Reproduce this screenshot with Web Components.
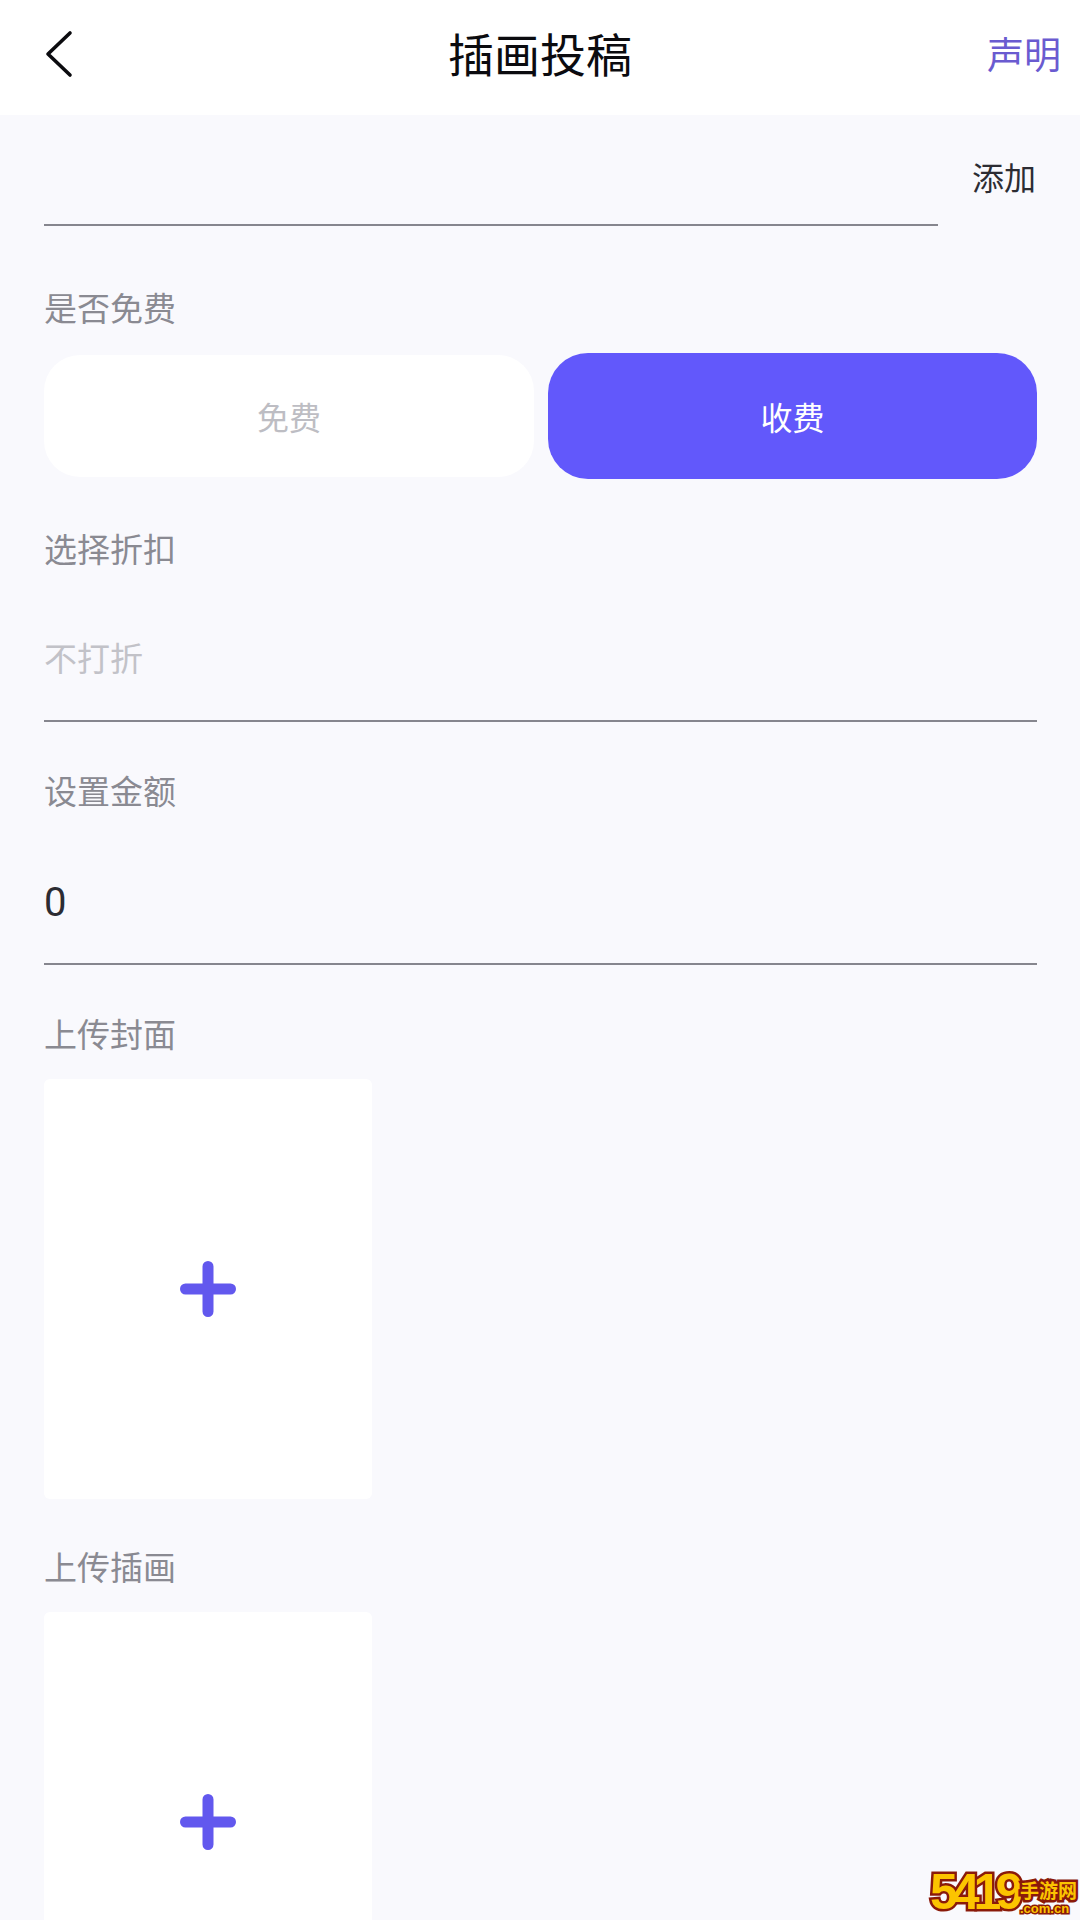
<!DOCTYPE html>
<html lang="zh">
<head>
<meta charset="utf-8">
<title>插画投稿</title>
<style>
    html, body { margin: 0; height: 1920px; overflow: hidden; background: #f9f9fd; }
    body { font-family: "Noto Sans CJK SC", "Noto Sans", sans-serif; position: relative; }
    main { display: flex; flex-direction: column; padding: 0 43px 0 44px; }
</style>
</head>
<body>
<nav-bar heading="插画投稿" action="声明"></nav-bar>
<main>
    <add-row action="添加"></add-row>
    <field-label style="margin-top:59px">是否免费</field-label>
    <price-toggle off="免费" on="收费"></price-toggle>
    <field-label style="margin-top:47px">选择折扣</field-label>
    <value-row muted>不打折</value-row>
    <field-label style="margin-top:46px">设置金额</field-label>
    <value-row number>0</value-row>
    <field-label style="margin-top:46px">上传封面</field-label>
    <upload-tile></upload-tile>
    <field-label style="margin-top:45px">上传插画</field-label>
    <upload-tile></upload-tile>
</main>
<site-mark></site-mark>

<script>
class NavBar extends HTMLElement {
    constructor(){
        super();
        this.shadowDOM = this.attachShadow({mode: 'open'});
    }
    connectedCallback(){
        this.shadowDOM.innerHTML = `
        <style>
            :host {
                display: grid;
                grid-template-columns: 1fr auto 1fr;
                align-items: center;
                height: 115px;
                background: #fff;
                padding: 0 19px 7px 19px;
                box-sizing: border-box;
            }
            svg { display: block; margin-left: 25px; }
            h1 {
                margin: 0 0 5px;
                font-size: 46px;
                font-weight: 400;
                line-height: 60px;
                color: #0b0b0f;
            }
            span {
                justify-self: end;
                margin-bottom: 3px;
                font-size: 37px;
                color: #6a5bd0;
            }
        </style>
        <svg width="30" height="48" viewBox="0 0 30 48">
            <path d="M26 3 L4 24 L26 45" fill="none" stroke="#0b0b0f" stroke-width="3.6" stroke-linecap="round" stroke-linejoin="round"/>
        </svg>
        <h1>${this.getAttribute('heading')}</h1>
        <span>${this.getAttribute('action')}</span>
        `;
    }
}

class AddRow extends HTMLElement {
    constructor(){
        super();
        this.shadowDOM = this.attachShadow({mode: 'open'});
    }
    connectedCallback(){
        this.shadowDOM.innerHTML = `
        <style>
            :host {
                display: flex;
                height: 111px;
                font-size: 32px;
                color: #2c2c33;
            }
            .line {
                width: 894px;
                height: 111px;
                box-sizing: border-box;
                border-bottom: 2px solid #86868e;
            }
            span {
                margin-left: 34px;
                line-height: 44px;
                padding-top: 39px;
            }
        </style>
        <div class="line"></div>
        <span>${this.getAttribute('action')}</span>
        `;
    }
}

class FieldLabel extends HTMLElement {
    constructor(){
        super();
        this.shadowDOM = this.attachShadow({mode: 'open'});
        this.shadowDOM.innerHTML = `
        <style>
            :host {
                display: block;
                padding-bottom: 2px;
                font-size: 33px;
                line-height: 44px;
                color: #8a8a92;
            }
        </style>
        <slot></slot>
        `;
    }
}

class PriceToggle extends HTMLElement {
    constructor(){
        super();
        this.shadowDOM = this.attachShadow({mode: 'open'});
    }
    connectedCallback(){
        this.shadowDOM.innerHTML = `
        <style>
            :host {
                display: grid;
                grid-template-columns: 490px 489px;
                column-gap: 14px;
                align-items: center;
                margin-top: 22px;
                font-size: 32px;
            }
            div {
                display: flex;
                align-items: center;
                justify-content: center;
            }
            .off {
                height: 122px;
                border-radius: 36px;
                background: #fff;
                color: #bdbdc3;
            }
            .on {
                height: 126px;
                border-radius: 40px;
                background: #6258fb;
                color: #fff;
            }
        </style>
        <div class="off">${this.getAttribute('off')}</div>
        <div class="on">${this.getAttribute('on')}</div>
        `;
    }
}

class ValueRow extends HTMLElement {
    constructor(){
        super();
        this.shadowDOM = this.attachShadow({mode: 'open'});
        this.shadowDOM.innerHTML = `
        <style>
            :host {
                display: block;
                padding: 63px 0 41px;
                border-bottom: 2px solid #86868e;
                font-size: 33px;
                line-height: 44px;
                color: #2c2c33;
            }
            :host([muted]) { color: #c2c2c8; }
            :host([number]) {
                padding: 67px 0 38px;
                font-family: Roboto, sans-serif;
                font-size: 40px;
            }
        </style>
        <slot></slot>
        `;
    }
}

class UploadTile extends HTMLElement {
    constructor(){
        super();
        this.shadowDOM = this.attachShadow({mode: 'open'});
        this.shadowDOM.innerHTML = `
        <style>
            :host {
                display: flex;
                align-items: center;
                justify-content: center;
                width: 328px;
                height: 420px;
                margin-top: 22px;
                background: #fff;
                border-radius: 6px;
            }
            svg { display: block; }
        </style>
        <svg width="56" height="56" viewBox="0 0 56 56">
            <path d="M28 5.5 V50.5 M5.5 28 H50.5" fill="none" stroke="#6258ee" stroke-width="11" stroke-linecap="round"/>
        </svg>
        `;
    }
}

class SiteMark extends HTMLElement {
    constructor(){
        super();
        this.shadowDOM = this.attachShadow({mode: 'open'});
        this.shadowDOM.innerHTML = `
        <style>
            :host {
                position: absolute;
                right: 0;
                bottom: 0;
                width: 150px;
                height: 56px;
                display: flex;
                align-items: center;
                font-family: "Liberation Sans", sans-serif;
                font-weight: 700;
                color: #fcc400;
                -webkit-text-stroke: 5px #8a1a0a;
                paint-order: stroke fill;
            }
            .num {
                flex: none;
                width: 87px;
                font-size: 50px;
                line-height: 52px;
                letter-spacing: -6px;
            }
            .site {
                display: flex;
                flex-direction: column;
                flex: none;
                margin-left: 3px;
                padding-top: 10px;
            }
            .cn {
                font-family: "Noto Sans CJK SC", sans-serif;
                font-size: 19px;
                line-height: 24px;
                white-space: nowrap;
            }
            .dom {
                font-size: 13px;
                line-height: 14px;
                -webkit-text-stroke-width: 3px;
                white-space: nowrap;
            }
        </style>
        <span class="num">5419</span>
        <div class="site">
            <span class="cn">手游网</span>
            <span class="dom">.com.cn</span>
        </div>
        `;
    }
}

customElements.define('nav-bar', NavBar);
customElements.define('add-row', AddRow);
customElements.define('field-label', FieldLabel);
customElements.define('price-toggle', PriceToggle);
customElements.define('value-row', ValueRow);
customElements.define('upload-tile', UploadTile);
customElements.define('site-mark', SiteMark);
</script>
</body>
</html>
